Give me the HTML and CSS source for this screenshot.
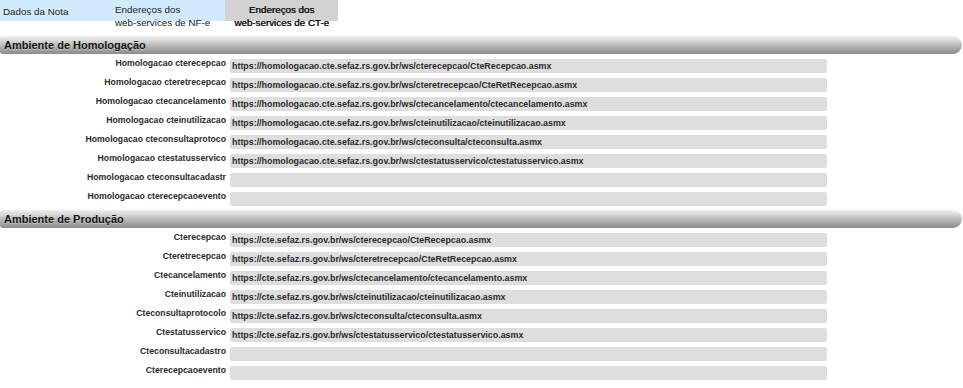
FILE: index.html
```html
<!DOCTYPE html>
<html lang="pt-BR">
<head>
<meta charset="utf-8">
<title>Endereços dos web-services de CT-e</title>
<link rel="stylesheet" href="styles.css">
</head>
<body>
<div class="tabs">
  <div class="tab tab-first">Dados da Nota</div>
  <div class="tab tab-second">Endereços dos<br>web-services de NF-e</div>
  <div class="tab tab-active">Endereços dos<br>web-services de CT-e</div>
</div>

<div class="section">
  <div class="section-header">Ambiente de Homologação</div>
  <div class="rows">
    <div class="row"><div class="label">Homologacao cterecepcao</div><div class="field">https://homologacao.cte.sefaz.rs.gov.br/ws/cterecepcao/CteRecepcao.asmx</div></div>
    <div class="row"><div class="label">Homologacao cteretrecepcao</div><div class="field">https://homologacao.cte.sefaz.rs.gov.br/ws/cteretrecepcao/CteRetRecepcao.asmx</div></div>
    <div class="row"><div class="label">Homologacao ctecancelamento</div><div class="field">https://homologacao.cte.sefaz.rs.gov.br/ws/ctecancelamento/ctecancelamento.asmx</div></div>
    <div class="row"><div class="label">Homologacao cteinutilizacao</div><div class="field">https://homologacao.cte.sefaz.rs.gov.br/ws/cteinutilizacao/cteinutilizacao.asmx</div></div>
    <div class="row"><div class="label">Homologacao cteconsultaprotoco</div><div class="field">https://homologacao.cte.sefaz.rs.gov.br/ws/cteconsulta/cteconsulta.asmx</div></div>
    <div class="row"><div class="label">Homologacao ctestatusservico</div><div class="field">https://homologacao.cte.sefaz.rs.gov.br/ws/ctestatusservico/ctestatusservico.asmx</div></div>
    <div class="row"><div class="label">Homologacao cteconsultacadastr</div><div class="field"></div></div>
    <div class="row"><div class="label">Homologacao cterecepcaoevento</div><div class="field"></div></div>
  </div>
</div>

<div class="section">
  <div class="section-header">Ambiente de Produção</div>
  <div class="rows">
    <div class="row"><div class="label">Cterecepcao</div><div class="field">https://cte.sefaz.rs.gov.br/ws/cterecepcao/CteRecepcao.asmx</div></div>
    <div class="row"><div class="label">Cteretrecepcao</div><div class="field">https://cte.sefaz.rs.gov.br/ws/cteretrecepcao/CteRetRecepcao.asmx</div></div>
    <div class="row"><div class="label">Ctecancelamento</div><div class="field">https://cte.sefaz.rs.gov.br/ws/ctecancelamento/ctecancelamento.asmx</div></div>
    <div class="row"><div class="label">Cteinutilizacao</div><div class="field">https://cte.sefaz.rs.gov.br/ws/cteinutilizacao/cteinutilizacao.asmx</div></div>
    <div class="row"><div class="label">Cteconsultaprotocolo</div><div class="field">https://cte.sefaz.rs.gov.br/ws/cteconsulta/cteconsulta.asmx</div></div>
    <div class="row"><div class="label">Ctestatusservico</div><div class="field">https://cte.sefaz.rs.gov.br/ws/ctestatusservico/ctestatusservico.asmx</div></div>
    <div class="row"><div class="label">Cteconsultacadastro</div><div class="field"></div></div>
    <div class="row"><div class="label">Cterecepcaoevento</div><div class="field"></div></div>
  </div>
</div>
</body>
</html>
```

FILE: styles.css
```css
html, body {
  margin: 0;
  padding: 0;
  background: #ffffff;
}

body {
  font-family: "Liberation Sans", Arial, sans-serif;
  color: #222;
  width: 963px;
}

.tabs {
  display: flex;
  height: 21px;
  margin-bottom: 15px;
}

.tab {
  box-sizing: border-box;
  height: 21px;
  font-size: 9.8px;
  line-height: 13px;
  color: #222;
  white-space: nowrap;
}

.tab-first {
  width: 115px;
  background: #d2ebfc;
  padding: 5px 0 0 3px;
}

.tab-second {
  width: 110px;
  background: #d2ebfc;
  padding-top: 3px;
}

.tab-active {
  width: 113px;
  background: #d3d3d3;
  text-align: center;
  color: #151515;
  text-shadow: 0.5px 0 0 #151515;
  padding-top: 3px;
}

.section-header {
  box-sizing: border-box;
  width: 962px;
  height: 18px;
  padding-left: 4px;
  font-size: 11px;
  line-height: 18px;
  font-weight: bold;
  color: #151515;
  text-shadow: 0 1px 0 rgba(255, 255, 255, 0.35);
  border-radius: 3px 9px 9px 3px;
  background: linear-gradient(#f0f0f0 0%, #d8d8d8 25%, #bdbdbd 50%, #a3a3a3 75%, #8c8c8c 100%);
}

.rows {
  display: flex;
  flex-direction: column;
  gap: 5px;
  padding: 5px 0 4px;
}

.row {
  display: flex;
  align-items: flex-start;
  gap: 4px;
  height: 14px;
}

.label {
  width: 226px;
  text-align: right;
  font-size: 8.7px;
  font-weight: bold;
  line-height: 10px;
  margin-top: -1px;
  color: #2a2a2a;
  white-space: nowrap;
}

.field {
  box-sizing: border-box;
  width: 597px;
  height: 14px;
  padding-left: 2px;
  background: #dedede;
  border-radius: 2px;
  font-size: 8.9px;
  font-weight: bold;
  line-height: 14px;
  color: #2a2a2a;
  white-space: nowrap;
  overflow: hidden;
}
```
